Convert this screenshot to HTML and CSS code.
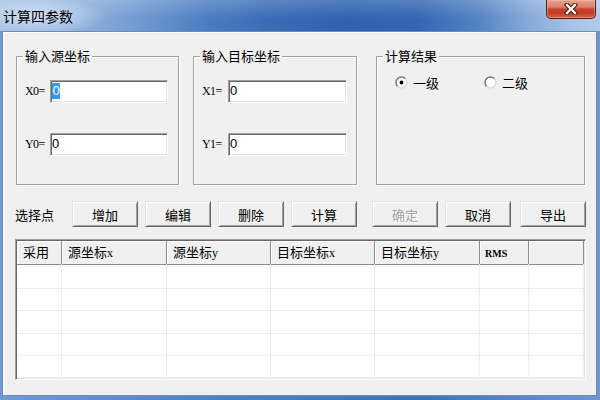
FILE: index.html
```html
<!DOCTYPE html>
<html lang="zh">
<head>
<meta charset="utf-8">
<title>计算四参数</title>
<link rel="stylesheet" href="styles.css">
</head>
<body>
<div class="window">
  <div class="titlebar">
    <span class="title">计算四参数</span>
    <div class="close">
      <svg width="16" height="12" viewBox="0 0 16 12">
        <path d="M4 2 L12 10 M12 2 L4 10" stroke="#4a140c" stroke-width="4.4" stroke-linecap="square" fill="none"/>
        <path d="M4 2 L12 10 M12 2 L4 10" stroke="#ffffff" stroke-width="2.4" stroke-linecap="square" fill="none"/>
      </svg>
    </div>
  </div>
  <div class="client">
    <div class="groups">
      <div class="group g1">
        <div class="gtitle">输入源坐标</div>
        <div class="field"><span class="lbl">X0=</span><span class="edit"><span class="sel">0</span></span></div>
        <div class="field f2"><span class="lbl">Y0=</span><span class="edit">0</span></div>
      </div>
      <div class="group g2">
        <div class="gtitle">输入目标坐标</div>
        <div class="field"><span class="lbl">X1=</span><span class="edit">0</span></div>
        <div class="field f2"><span class="lbl">Y1=</span><span class="edit">0</span></div>
      </div>
      <div class="group g3">
        <div class="gtitle">计算结果</div>
        <div class="radios">
          <span class="radio">
            <svg width="13" height="13" viewBox="0 0 13 13">
              <circle cx="6.5" cy="6.5" r="5" fill="#fff"/>
              <path d="M2.6 10.4 A5.5 5.5 0 0 1 10.4 2.6" stroke="#7a7a7a" stroke-width="1.5" fill="none"/>
              <path d="M10.4 2.6 A5.5 5.5 0 0 1 2.6 10.4" stroke="#dcdcdc" stroke-width="1.5" fill="none"/>
              <circle cx="6.5" cy="6.5" r="1.9" fill="#000"/>
            </svg>
            <span>一级</span>
          </span>
          <span class="radio">
            <svg width="13" height="13" viewBox="0 0 13 13">
              <circle cx="6.5" cy="6.5" r="5" fill="#fff"/>
              <path d="M2.6 10.4 A5.5 5.5 0 0 1 10.4 2.6" stroke="#7a7a7a" stroke-width="1.5" fill="none"/>
              <path d="M10.4 2.6 A5.5 5.5 0 0 1 2.6 10.4" stroke="#dcdcdc" stroke-width="1.5" fill="none"/>
            </svg>
            <span>二级</span>
          </span>
        </div>
      </div>
    </div>
    <div class="toolbar">
      <span class="tlabel">选择点</span>
      <button class="btn">增加</button>
      <button class="btn">编辑</button>
      <button class="btn">删除</button>
      <button class="btn">计算</button>
      <button class="btn btn-ok" disabled>确定</button>
      <button class="btn">取消</button>
      <button class="btn btn-last">导出</button>
    </div>
    <div class="list">
      <div class="lhead">
        <div class="hc">采用</div>
        <div class="hc">源坐标<span class="lat">x</span></div>
        <div class="hc">源坐标<span class="lat">y</span></div>
        <div class="hc">目标坐标<span class="lat">x</span></div>
        <div class="hc">目标坐标<span class="lat">y</span></div>
        <div class="hc"><span class="lat rms">RMS</span></div>
        <div class="hc"></div>
      </div>
      <div class="lbody">
        <div class="row r1"><div class="cell"></div><div class="cell"></div><div class="cell"></div><div class="cell"></div><div class="cell"></div><div class="cell"></div><div class="cell"></div></div>
        <div class="row r2"><div class="cell"></div><div class="cell"></div><div class="cell"></div><div class="cell"></div><div class="cell"></div><div class="cell"></div><div class="cell"></div></div>
        <div class="row r3"><div class="cell"></div><div class="cell"></div><div class="cell"></div><div class="cell"></div><div class="cell"></div><div class="cell"></div><div class="cell"></div></div>
        <div class="row r2"><div class="cell"></div><div class="cell"></div><div class="cell"></div><div class="cell"></div><div class="cell"></div><div class="cell"></div><div class="cell"></div></div>
        <div class="row r2"><div class="cell"></div><div class="cell"></div><div class="cell"></div><div class="cell"></div><div class="cell"></div><div class="cell"></div><div class="cell"></div></div>
      </div>
    </div>
  </div>
</div>
</body>
</html>
```

FILE: styles.css
```css
* { box-sizing: border-box; }
html, body { margin: 0; padding: 0; }
body {
  width: 600px;
  height: 400px;
  overflow: hidden;
  font-family: "Noto Sans CJK SC", sans-serif;
  font-size: 13px;
  color: #000;
}
.window {
  width: 600px;
  height: 400px;
  display: flex;
  flex-direction: column;
  background: linear-gradient(to right, #6f9ad2, #4d7ec2 40%, #3f72ba 70%, #6e97cf);
}
.titlebar {
  height: 31px;
  flex: none;
  display: flex;
  align-items: flex-start;
  background:
    radial-gradient(ellipse 70px 18px at 38px 16px, rgba(225,236,250,0.75), rgba(225,236,250,0)),
    linear-gradient(to bottom, rgba(255,255,255,0.18), rgba(255,255,255,0) 60%),
    linear-gradient(to right, #a5c1e4 0%, #94b5de 12%, #6d98d0 24%, #4d7ec2 34%, #3a6cb6 45%, #2f62b0 58%, #3467b3 70%, #5584c4 80%, #86aad9 88%, #a6c2e5 95%, #b3cbe8 100%);
}
.title {
  font-size: 14px;
  line-height: 16px;
  margin: 8px 0 0 3px;
  color: #000;
}
.close {
  margin-left: auto;
  margin-right: 4px;
  width: 50px;
  height: 19px;
  border: 1px solid #5a1c14;
  border-top: none;
  border-radius: 0 0 5px 5px;
  background: linear-gradient(to bottom, #e7a493 0%, #d97e6a 40%, #c8442f 50%, #c13a27 70%, #d4623f 100%);
  box-shadow: inset 0 0 0 1px rgba(255, 190, 175, 0.45);
  display: flex;
  align-items: center;
  justify-content: center;
}
.client {
  flex: 1;
  margin: 0 3px 4px 2px;
  background: #f0f0f0;
  border: 1px solid #6f8bb0;
  box-shadow: inset 1px 1px #ffffff;
}
.groups {
  display: flex;
  margin: 24px 0 0 13px;
}
.group {
  height: 129px;
  border: 1px solid #a0a0a0;
  box-shadow: inset 1px 1px #ffffff, 1px 1px #ffffff;
  padding: 0 0 0 8px;
}
.g1 { width: 163px; }
.g2 { width: 164px; margin-left: 14px; }
.g3 { width: 209px; margin-left: 19px; }
.gtitle {
  display: table;
  margin: -9px 0 0 -2px;
  padding: 0 2px;
  line-height: 16px;
  background: #f0f0f0;
}
.field {
  display: flex;
  align-items: center;
  margin-top: 16px;
}
.field.f2 { margin-top: 30px; }
.lbl {
  width: 25px;
  font-family: "Liberation Serif", serif;
  font-size: 12px;
  letter-spacing: -0.6px;
}
.g2 .lbl { width: 26px; }
.edit {
  width: 118px;
  height: 23px;
  background: #fff;
  border: 1px solid;
  border-color: #a0a0a0 #ffffff #ffffff #a0a0a0;
  box-shadow: inset 1px 1px #696969, inset -1px -1px #e3e3e3;
  font-family: "Liberation Sans", sans-serif;
  font-size: 13px;
  line-height: 16px;
  padding: 2px 0 0 1px;
}
.g2 .edit { width: 119px; }
.sel {
  display: inline-block;
  background: #3399ff;
  color: #fff;
  padding: 0 0.5px;
}
.radios {
  display: flex;
  align-items: center;
  margin-top: 10px;
  padding-left: 10px;
  height: 16px;
}
.radio {
  display: flex;
  align-items: center;
  gap: 5px;
  width: 89px;
}
.radio svg { display: block; }
.toolbar {
  display: flex;
  align-items: center;
  gap: 7px;
  height: 26px;
  margin: 16px 0 0 12px;
}
.tlabel { width: 50px; }
.btn {
  width: 66px;
  height: 26px;
  padding: 0;
  font-family: "Noto Sans CJK SC", sans-serif;
  font-size: 13px;
  color: #000;
  background: #f0f0f0;
  border: 1px solid;
  border-color: #e3e3e3 #696969 #696969 #e3e3e3;
  box-shadow: inset 1px 1px #ffffff, inset -1px -1px #a0a0a0;
}
.btn:disabled {
  color: #a0a0a0;
  text-shadow: 1px 1px #ffffff;
}
.btn-ok { margin-left: 8px; }
.btn-last { margin-left: 2px; }
.list {
  margin: 12px 0 0 12px;
  width: 571px;
  height: 141px;
  padding: 1px;
  background: #fff;
  border: 1px solid;
  border-color: #a0a0a0 #ffffff #ffffff #a0a0a0;
  box-shadow: inset 1px 1px #696969, inset -1px -1px #e3e3e3;
}
.lhead, .row {
  display: grid;
  grid-template-columns: 45px 105px 104px 104px 105px 49px 55px;
}
.lhead { height: 23px; }
.hc {
  background: #f0f0f0;
  border-right: 1px solid #8c8c8c;
  border-bottom: 1px solid #8c8c8c;
  box-shadow: inset 1px 1px #ffffff;
  padding-left: 6px;
  line-height: 21px;
  white-space: nowrap;
}
.lat {
  font-family: "Liberation Serif", serif;
  font-size: 12px;
}
.rms { font-size: 10px; font-weight: bold; margin-left: -1px; }
.r1 { height: 25px; }
.r2 { height: 22px; }
.r3 { height: 23px; }
.cell {
  border-right: 1px solid #ececec;
  border-bottom: 1px solid #ececec;
}
```
